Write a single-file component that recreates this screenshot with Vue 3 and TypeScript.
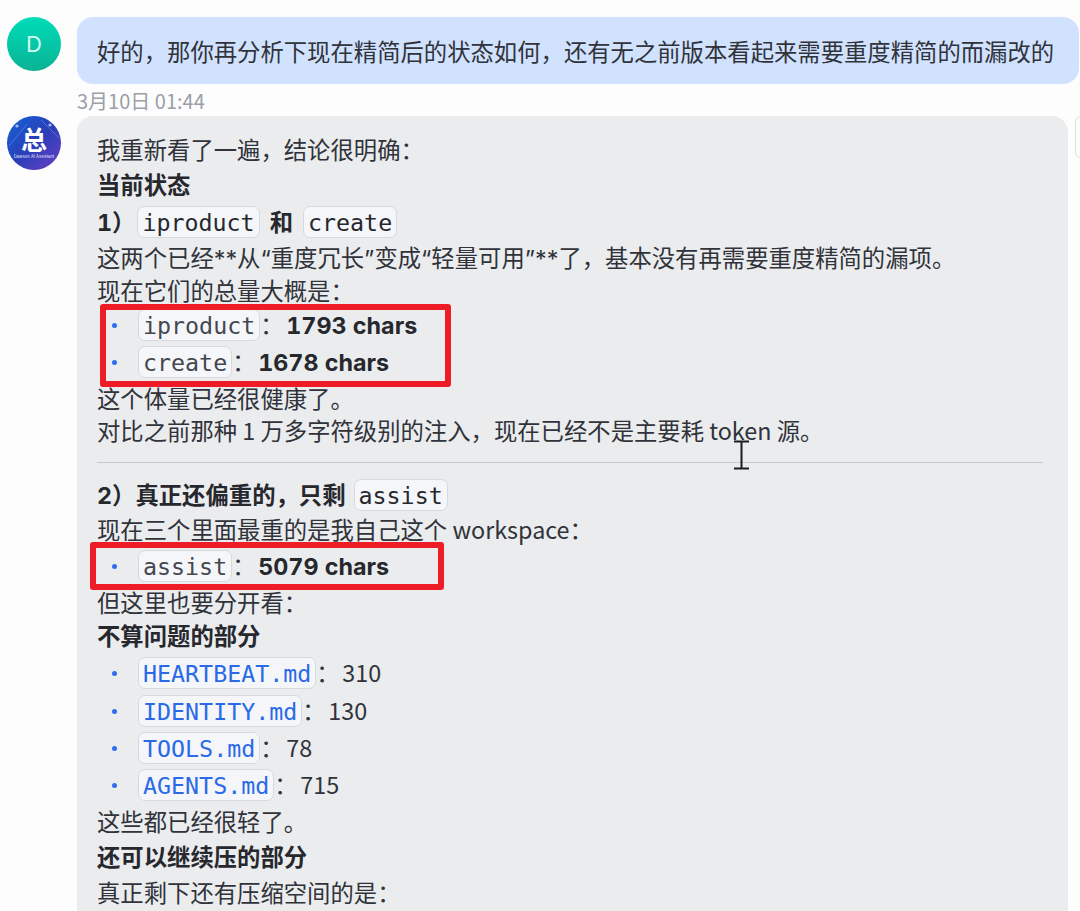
<script setup lang="ts">
interface FileRow {
  name: string;
  count: number;
}
const files: FileRow[] = [
  { name: 'HEARTBEAT.md', count: 310 },
  { name: 'IDENTITY.md', count: 130 },
  { name: 'TOOLS.md', count: 78 },
  { name: 'AGENTS.md', count: 715 },
]
</script>

<template>
  <div class="page">
    <div class="row">
      <div class="avatar user">D</div>
      <div class="bubble user-bubble">好的，那你再分析下现在精简后的状态如何，还有无之前版本看起来需要重度精简的而漏改的</div>
    </div>
    <div class="time">3月10日 01:44</div>
    <div class="row">
      <div class="avatar bot">
        <svg class="stars" viewBox="0 0 54 54">
          <path d="M2 30 L20 8 M34 4 L52 22" stroke="#7fa8ff" stroke-width="0.7" opacity="0.6" />
          <circle cx="10" cy="10" r="1.6" fill="#9cc0ff" />
          <circle cx="43" cy="9" r="1.6" fill="#9cc0ff" />
        </svg>
        <span class="bot-char">总</span>
        <span class="bot-name">Dawson AI Assistant</span>
      </div>
      <div class="bubble bot-bubble">
        <p>我重新看了一遍，结论很明确：</p>
        <p class="title"><b>当前状态</b></p>
        <p class="h first"><b>1）</b><code class="near">iproduct</code><b class="gap">和</b><code>create</code></p>
        <p class="mixed">这两个已经**从“重度冗长”变成“轻量可用”**了，基本没有再需要重度精简的漏项。</p>
        <p>现在它们的总量大概是：</p>
        <ul class="marked list-a">
          <li><code>iproduct</code><span class="colon">：</span><b>1793 chars</b></li>
          <li><code>create</code><span class="colon">：</span><b>1678 chars</b></li>
          <div class="mark mark-a"></div>
        </ul>
        <p>这个体量已经很健康了。</p>
        <p class="tight">对比之前那种 1 万多字符级别的注入，现在已经不是主要耗 token 源。</p>
        <hr />
        <p class="h"><b>2）真正还偏重的，只剩</b><code class="far">assist</code></p>
        <p>现在三个里面最重的是我自己这个 workspace：</p>
        <ul class="marked list-b">
          <li><code>assist</code><span class="colon">：</span><b>5079 chars</b></li>
          <div class="mark mark-b"></div>
        </ul>
        <p class="short">但这里也要分开看：</p>
        <p><b>不算问题的部分</b></p>
        <ul>
          <li v-for="f in files" :key="f.name">
            <code class="link">{{ f.name }}</code><span class="colon">：</span>{{ f.count }}
          </li>
        </ul>
        <p>这些都已经很轻了。</p>
        <p><b>还可以继续压的部分</b></p>
        <p>真正剩下还有压缩空间的是：</p>
      </div>
      <div class="side-btn"></div>
    </div>
    <svg class="cursor" width="18" height="30" viewBox="0 0 18 30">
      <path d="M1 1.5 H16 M8.5 1.5 V28.5 M1 28.5 H16" stroke="#1c1c1c" stroke-width="2" fill="none" />
    </svg>
  </div>
</template>

<style scoped>
.page {
  position: relative;
  height: 911px;
  overflow: hidden;
  box-sizing: border-box;
  padding: 17px 0 0 7px;
  background: #fdfdfd;
  color: #30333a;
  font-family: "Noto Sans CJK SC", sans-serif;
  font-size: 23.35px;
  line-height: 35px;
}
.row {
  display: flex;
  align-items: flex-start;
  gap: 16px;
}
.avatar {
  position: relative;
  flex: none;
  width: 54px;
  height: 54px;
  border-radius: 50%;
  overflow: hidden;
  display: flex;
  flex-direction: column;
  align-items: center;
  justify-content: center;
}
.user {
  background: linear-gradient(180deg, #00dcb8, #0ab394);
  color: #d4fbf2;
  font-family: Inter, sans-serif;
  font-size: 22px;
}
.bot {
  background: linear-gradient(135deg, #1565d8 0%, #2a3fb8 50%, #6a3fc8 100%);
  color: #fff;
}
.stars {
  position: absolute;
  inset: 0;
}
.bot-char {
  position: relative;
  font-size: 26px;
  line-height: 24px;
  height: 24px;
  font-weight: 700;
}
.bot-name {
  position: relative;
  font-family: Inter, sans-serif;
  font-size: 4.2px;
  line-height: 6px;
  margin-top: 3px;
  white-space: nowrap;
  opacity: 0.85;
}
.bubble {
  flex: none;
  box-sizing: border-box;
  border-radius: 16px;
  padding: 0 20px;
}
.user-bubble {
  width: 1002px;
  height: 67px;
  background: #d1e2ff;
  line-height: 68px;
  white-space: nowrap;
}
.time {
  margin: 3px 0 0 70px;
  height: 29px;
  font-size: 20px;
  line-height: 27px;
  color: #9a9fa8;
}
.bot-bubble {
  width: 991px;
  min-height: 1000px;
  background: #ebecee;
  padding-top: 16px;
}
.side-btn {
  position: absolute;
  left: 1075px;
  top: 116px;
  width: 20px;
  height: 42px;
  box-sizing: border-box;
  border: 1px solid #dcdde0;
  border-radius: 6px;
  background: #fff;
}
p {
  margin: 0;
  white-space: nowrap;
}
b,
.mixed {
  font-family: Inter, "Noto Sans CJK SC", sans-serif;
}
b {
  font-feature-settings: "tnum";
  font-weight: 700;
  color: #26282e;
}
.mixed {
  height: 35px;
  line-height: 41px;
}
.title {
  height: 34px;
}
.h {
  height: 36px;
  line-height: 37px;
}
.first {
  height: 37px;
  line-height: 41px;
}
.tight {
  margin-top: -3px;
}
.short {
  height: 33px;
}
.gap {
  margin: 0 10px;
}
.near {
  margin-left: 2px;
}
.far {
  margin-left: 8px;
}
.h code {
  color: #26282e;
}
code {
  display: inline-block;
  box-sizing: border-box;
  height: 32px;
  line-height: 31px;
  padding: 0 4px;
  border: 1px solid #d8d9dc;
  border-radius: 7px;
  background: #f5f6f9;
  font-family: "DejaVu Sans Mono", monospace;
  font-size: 23.3px;
  vertical-align: 0;
  color: #44474e;
}
code.link {
  color: #2a6ae8;
}
hr {
  border: 0;
  border-top: 1px solid #c8c9cc;
  margin: 14px 5px 13px 0;
}
ul {
  position: relative;
  list-style: none;
  margin: 0;
  padding: 0;
}
.list-a {
  margin-top: -2px;
}
.list-b {
  margin-bottom: 1px;
}
li {
  position: relative;
  height: 37.4px;
  line-height: 37.4px;
  padding-left: 41px;
  white-space: nowrap;
}
li::before {
  content: "";
  position: absolute;
  left: 15px;
  top: 17px;
  width: 5px;
  height: 5px;
  border-radius: 50%;
  background: #2f6df0;
}
.colon {
  display: inline-block;
  width: 26px;
}
.mark {
  position: absolute;
  box-sizing: border-box;
  border: 6px solid #ee1c25;
  border-radius: 3px;
}
.mark-a {
  left: 3px;
  top: -2px;
  width: 351px;
  height: 83px;
}
.mark-b {
  left: -7px;
  top: -5px;
  width: 354px;
  height: 48px;
}
.cursor {
  position: absolute;
  left: 733px;
  top: 440px;
}
</style>

<style>
html, body {
  margin: 0;
  overflow: hidden;
}
</style>
